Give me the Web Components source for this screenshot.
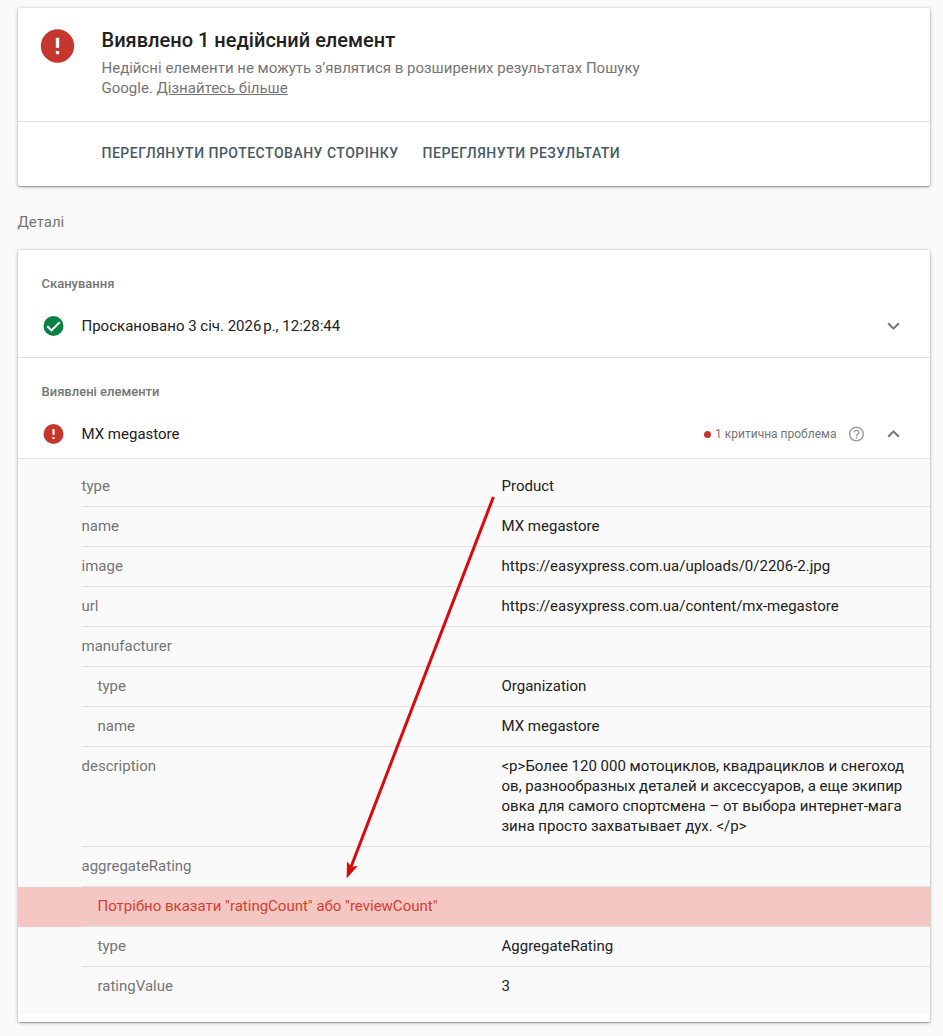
<!DOCTYPE html>
<html lang="uk">
<head>
<meta charset="utf-8">
<title>Rich results</title>
<style>
  body {
    margin: 0;
    padding: 8px 13.5px 14px 17.5px;
    position: relative;
    background: #fafafa;
    color: #212121;
    font: 15px/20px Roboto, "Liberation Sans", sans-serif;
  }
  h2 {
    margin: 26px 0 18px;
    font: inherit;
    color: #757575;
  }
</style>
</head>
<body>

<result-card>
  <test-summary>
    <span slot="title">Виявлено 1 недійсний елемент</span>
    Недійсні елементи не можуть з’являтися в розширених результатах Пошуку Google. <a>Дізнайтесь більше</a>
    <action-button slot="actions">Переглянути протестовану сторінку</action-button>
    <action-button slot="actions">Переглянути результати</action-button>
  </test-summary>
</result-card>

<h2>Деталі</h2>

<result-card>
  <result-section label="Сканування">
    <result-header icon="ok" chevron="down">Проскановано 3 січ. 2026&#8239;р., 12:28:44</result-header>
  </result-section>
  <result-section label="Виявлені елементи">
    <result-header class="open" icon="error" chevron="up">MX megastore
      <issue-count slot="issues">1 критична проблема</issue-count>
    </result-header>
    <property-list slot="content">
      <property-row name="type">Product</property-row>
      <property-row name="name">MX megastore</property-row>
      <property-row name="image">https://easyxpress.com.ua/uploads/0/2206-2.jpg</property-row>
      <property-row name="url">https://easyxpress.com.ua/content/mx-megastore</property-row>
      <property-row name="manufacturer"></property-row>
      <property-row name="type" nested>Organization</property-row>
      <property-row name="name" nested>MX megastore</property-row>
      <property-row name="description">&lt;p&gt;Более 120 000 мотоциклов, квадрациклов и снегоходов, разнообразных деталей и аксессуаров, а еще экипировка для самого спортсмена – от выбора интернет-магазина просто захватывает дух. &lt;/p&gt;</property-row>
      <property-row name="aggregateRating"></property-row>
      <property-row name='Потрібно вказати "ratingCount" або "reviewCount"' nested error></property-row>
      <property-row name="type" nested>AggregateRating</property-row>
      <property-row name="ratingValue" nested>3</property-row>
    </property-list>
  </result-section>
</result-card>

<pointer-arrow></pointer-arrow>

<script>
const icons = {
  error: '<circle cx="12" cy="12" r="10" fill="#c5372c"/><path d="M11 7h2v6h-2zM11 15h2v2h-2z" fill="#fff"/>',
  ok: '<circle cx="12" cy="12" r="10" fill="#0b8043"/><path d="M5.8 12.2l4.2 4.2 8.2-8.2" fill="none" stroke="#fff" stroke-width="2"/>',
  down: '<path d="M7.41 8.59L12 13.17l4.59-4.58L18 10l-6 6-6-6z" fill="#757575"/>',
  up: '<path d="M7.41 15.41L12 10.83l4.59 4.58L18 14l-6-6-6 6z" fill="#757575"/>',
  help: '<path d="M11 18h2v-2h-2v2zm1-16C6.48 2 2 6.48 2 12s4.48 10 10 10 10-4.48 10-10S17.52 2 12 2zm0 18c-4.41 0-8-3.59-8-8s3.59-8 8-8 8 3.59 8 8-3.59 8-8 8zm0-14c-2.21 0-4 1.79-4 4h2c0-1.1.9-2 2-2s2 .9 2 2c0 2-3 1.75-3 5h2c0-2.25 3-2.5 3-5 0-2.21-1.79-4-4-4z" fill="#9e9e9e"/>'
};

// the viewBox starts half a pixel in, because the cards sit on a half pixel
function icon(name, size) {
  return `<svg class="${name}" width="${size}" height="${size}" viewBox="${12 / size} 0 24 24">${icons[name]}</svg>`;
}

class ResultCard extends HTMLElement {
  connectedCallback() {
    this.attachShadow({ mode: 'open' }).innerHTML = `
      <style>
        :host {
          display: block;
          background: #fff;
          border-radius: 2px;
          box-shadow: 0 1px 1px rgba(0,0,0,.24), 0 1px 4px rgba(0,0,0,.24), 0 0 2px rgba(0,0,0,.12);
        }
      </style>
      <slot></slot>`;
  }
}

class TestSummary extends HTMLElement {
  connectedCallback() {
    this.attachShadow({ mode: 'open' }).innerHTML = `
      <style>
        :host { display: block; }
        .top {
          display: flex;
          box-sizing: border-box;
          height: 114px;
          padding: 18px 24px 0 20px;
          border-bottom: 1px solid #e0e0e0;
        }
        svg { flex: none; margin-right: 24px; }
        .title {
          margin: 1px 0 5px;
          font-size: 20px;
          line-height: 26px;
          font-weight: 500;
          letter-spacing: .01px;
        }
        .text { max-width: 560px; color: #757575; }
        ::slotted(a) { text-decoration: underline; }
        .actions {
          display: flex;
          gap: 24px;
          box-sizing: border-box;
          height: 64px;
          align-items: center;
          padding: 0 0 2px 84px;
        }
      </style>
      <div class="top">
        ${icon('error', 40)}
        <div>
          <div class="title"><slot name="title"></slot></div>
          <div class="text"><slot></slot></div>
        </div>
      </div>
      <div class="actions"><slot name="actions"></slot></div>`;
  }
}

class ActionButton extends HTMLElement {
  connectedCallback() {
    this.attachShadow({ mode: 'open' }).innerHTML = `
      <style>
        :host {
          display: block;
          color: #455a64;
          font-size: 14px;
          font-weight: 500;
          letter-spacing: .5px;
          text-transform: uppercase;
          white-space: nowrap;
        }
      </style>
      <slot></slot>`;
  }
}

class ResultSection extends HTMLElement {
  connectedCallback() {
    this.attachShadow({ mode: 'open' }).innerHTML = `
      <style>
        :host { display: block; }
        .label {
          padding: 24px 24px 8px;
          color: #757575;
          font-size: 13px;
          font-weight: 500;
        }
      </style>
      <div class="label">${this.getAttribute('label')}</div>
      <slot></slot>
      <slot name="content"></slot>`;
  }
}

class ResultHeader extends HTMLElement {
  connectedCallback() {
    this.attachShadow({ mode: 'open' }).innerHTML = `
      <style>
        :host {
          display: flex;
          align-items: center;
          box-sizing: border-box;
          height: 56px;
          padding: 0 24px 7px;
          border-bottom: 1px solid #e0e0e0;
        }
        :host(.open) { height: 49px; padding-bottom: 0; }
        .name { flex: 1; margin-left: 16px; }
        svg { flex: none; }
      </style>
      ${icon(this.getAttribute('icon'), 24)}
      <span class="name"><slot></slot></span>
      <slot name="issues"></slot>
      ${icon(this.getAttribute('chevron'), 24)}`;
  }
}

class IssueCount extends HTMLElement {
  connectedCallback() {
    this.attachShadow({ mode: 'open' }).innerHTML = `
      <style>
        :host {
          display: flex;
          align-items: center;
          margin-right: 16px;
          color: #757575;
          font-size: 12px;
        }
        .dot {
          width: 7px;
          height: 7px;
          margin-right: 4.5px;
          border-radius: 50%;
          background: #c5372c;
        }
        .help { margin-left: 11px; }
      </style>
      <i class="dot"></i><slot></slot>${icon('help', 18)}`;
  }
}

class PropertyList extends HTMLElement {
  connectedCallback() {
    this.attachShadow({ mode: 'open' }).innerHTML = `
      <style>
        :host {
          display: block;
          padding: 8px 0 7px;
          background: #fafafa;
          border-bottom: 8px solid #fff;
          border-radius: 0 0 2px 2px;
        }
      </style>
      <slot></slot>`;
  }
}

class PropertyRow extends HTMLElement {
  connectedCallback() {
    this.attachShadow({ mode: 'open' }).innerHTML = `
      <style>
        :host { display: block; padding-left: 64px; }
        .row {
          display: flex;
          padding: 9px 0 10px;
          border-bottom: 1px solid #e0e0e0;
        }
        .name { width: 420px; box-sizing: border-box; color: #757575; }
        .value { width: 404px; word-break: break-all; }
        :host([nested]) .name { padding-left: 16px; }
        :host([error]) { background: #f4c7c3; }
        :host([error]) .name { color: #d23f31; }
        :host(:last-child) .row { border-color: transparent; }
      </style>
      <div class="row">
        <div class="name">${this.getAttribute('name')}</div>
        <div class="value"><slot></slot></div>
      </div>`;
  }
}

// red arrow from the product type down to the missing rating field
class PointerArrow extends HTMLElement {
  connectedCallback() {
    this.attachShadow({ mode: 'open' }).innerHTML = `
      <style>
        :host { position: absolute; left: 340px; top: 490px; pointer-events: none; }
        svg { display: block; }
      </style>
      <svg width="160" height="395" fill="#d80a0a">
        <path d="M153.4 7L11 377" stroke="#d80a0a" stroke-width="3"/>
        <path d="M6.6 388.5L7 371.6L11.6 377L17.8 375.8z"/>
      </svg>`;
  }
}

customElements.define('result-card', ResultCard);
customElements.define('test-summary', TestSummary);
customElements.define('action-button', ActionButton);
customElements.define('result-section', ResultSection);
customElements.define('result-header', ResultHeader);
customElements.define('issue-count', IssueCount);
customElements.define('property-list', PropertyList);
customElements.define('property-row', PropertyRow);
customElements.define('pointer-arrow', PointerArrow);
</script>
</body>
</html>
